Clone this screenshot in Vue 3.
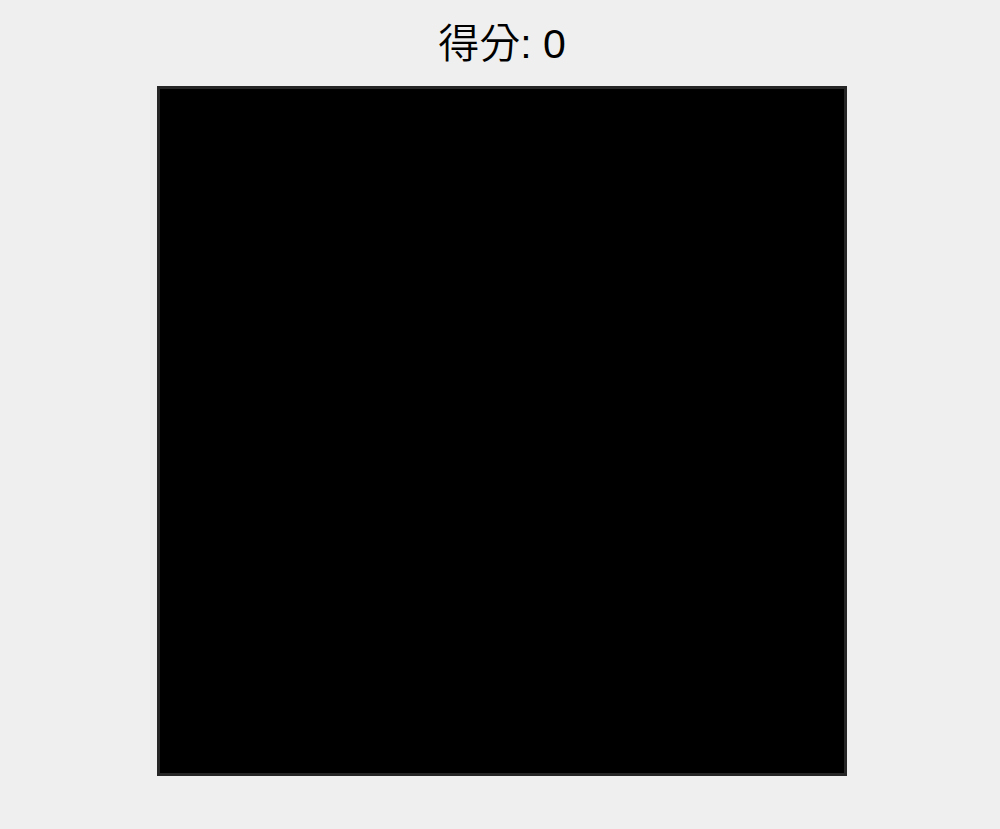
<template>
  <div class="game">
    <div class="score">得分: {{ score }}</div>
    <canvas ref="board" class="board" width="400" height="400"></canvas>
  </div>
</template>

<script setup>
import { onMounted, ref } from "vue";

const board = ref(null);
const score = ref(0);

// Clear the playing field
function clearBoard() {
  const ctx = board.value.getContext("2d");
  ctx.fillStyle = "#000";
  ctx.fillRect(0, 0, board.value.width, board.value.height);
}

onMounted(clearBoard);
</script>

<style>
body {
  margin: 0;
  background-color: #efefef;
}
</style>

<style scoped>
.game {
  display: flex;
  flex-direction: column;
  align-items: center;
  gap: 18px;
  padding: 20px 0 53px 4px;
  font-family: "Liberation Sans", "Noto Sans CJK TC", sans-serif;
}

.score {
  font-size: 41px;
  font-weight: 350;
  line-height: 48px;
  color: #000;
}

.board {
  box-sizing: border-box;
  width: 69vw;
  aspect-ratio: 1;
  border: 3px solid #262626;
  background-color: #000;
}
</style>
